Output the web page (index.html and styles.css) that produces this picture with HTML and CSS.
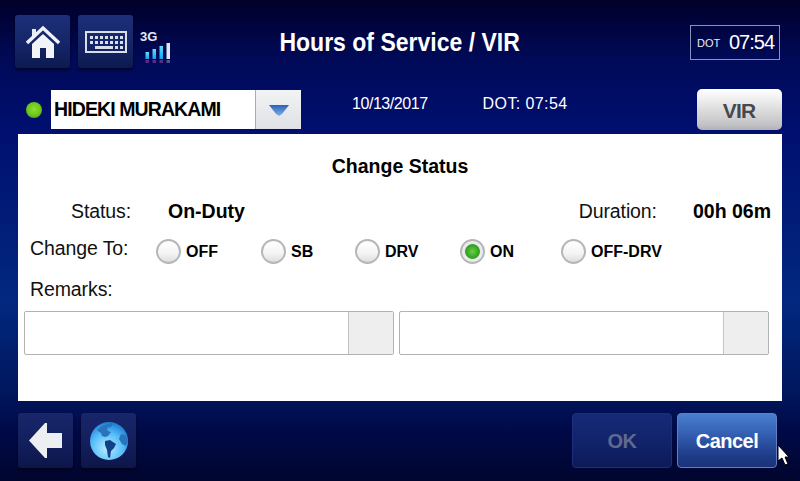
FILE: index.html
```html
<!DOCTYPE html>
<html lang="en">
<head>
    <meta charset="UTF-8">
    <title>Hours of Service / VIR</title>
    <link rel="stylesheet" href="styles.css">
</head>
<body>
    <div class="screen">
        <div class="top-bar">
            <div class="icon-btn">
                <svg width="34" height="34" viewBox="0 0 34 34">
                    <path d="M6 4h4v5l-4 3.500z" fill="#e8ecf2"/>
                    <path d="M1 18L17 3l16 15" fill="none" stroke="#eef1f6" stroke-width="3.400"/>
                    <path d="M6 19L17 9l11 10v14h-8V23h-6v10H6z" fill="#f2f4f8"/>
                </svg>
            </div>
            <div class="icon-btn keyboard-btn">
                <svg width="42" height="22" viewBox="0 0 42 22">
                    <rect x="1" y="1" width="40" height="20" fill="none" stroke="#d9deea" stroke-width="2"/>
                    <g fill="#d9deea">
                        <rect x="5" y="5" width="3" height="3"/>
                        <rect x="10" y="5" width="3" height="3"/>
                        <rect x="15" y="5" width="3" height="3"/>
                        <rect x="20" y="5" width="3" height="3"/>
                        <rect x="25" y="5" width="3" height="3"/>
                        <rect x="30" y="5" width="3" height="3"/>
                        <rect x="35" y="5" width="3" height="3"/>
                        <rect x="5" y="10" width="3" height="3"/>
                        <rect x="10" y="10" width="3" height="3"/>
                        <rect x="15" y="10" width="3" height="3"/>
                        <rect x="20" y="10" width="3" height="3"/>
                        <rect x="25" y="10" width="3" height="3"/>
                        <rect x="30" y="10" width="3" height="3"/>
                        <rect x="35" y="10" width="3" height="3"/>
                        <rect x="10" y="15" width="18" height="3"/>
                        <rect x="30" y="15" width="3" height="3"/>
                        <rect x="35" y="15" width="3" height="3"/>
                    </g>
                </svg>
            </div>
            <div class="signal">
                <span class="signal-label">3G</span>
                <svg width="26" height="21" viewBox="0 0 26 21">
                    <defs>
                        <linearGradient id="barBlue" x1="0" y1="0" x2="0" y2="1">
                            <stop offset="0" stop-color="#62dcff"/>
                            <stop offset="1" stop-color="#12a4f0"/>
                        </linearGradient>
                    </defs>
                    <rect x="0.500" y="9" width="3.500" height="7" fill="url(#barBlue)"/>
                    <rect x="7.500" y="6" width="3.500" height="10" fill="url(#barBlue)"/>
                    <rect x="14.500" y="3" width="3.500" height="13" fill="url(#barBlue)"/>
                    <rect x="21.500" y="0" width="3.500" height="16" fill="#dfe8f6"/>
                    <rect x="0.500" y="17" width="3.500" height="3" fill="#5a2a84"/>
                    <rect x="7.500" y="17" width="3.500" height="3" fill="#5a2a84"/>
                    <rect x="14.500" y="17" width="3.500" height="3" fill="#5a2a84"/>
                    <rect x="21.500" y="17" width="3.500" height="3" fill="#50508c"/>
                </svg>
            </div>
            <h1 class="page-title"><span>Hours of Service / VIR</span></h1>
            <div class="clock-box">
                <span class="clock-tag">DOT</span>
                <span class="clock-time">07:54</span>
            </div>
        </div>

        <div class="driver-bar">
            <span class="led"></span>
            <div class="driver-select">
                <span class="driver-name">HIDEKI MURAKAMI</span>
                <span class="driver-arrow">
                    <svg width="20" height="12" viewBox="0 0 20 12">
                        <defs>
                            <linearGradient id="arrowBlue" x1="0" y1="0" x2="0" y2="1">
                                <stop offset="0" stop-color="#2a62b8"/>
                                <stop offset="1" stop-color="#7fb0ea"/>
                            </linearGradient>
                        </defs>
                        <path d="M0 1h20l-7 9-3 2-3-2z" fill="url(#arrowBlue)"/>
                    </svg>
                </span>
            </div>
            <span class="date-text">10/13/2017</span>
            <span class="dot-text">DOT: 07:54</span>
            <div class="vir-btn">VIR</div>
        </div>

        <div class="panel">
            <h2 class="panel-title">Change Status</h2>
            <div class="status-row">
                <span class="label status-label">Status:</span>
                <span class="value status-value">On-Duty</span>
                <span class="label duration-label">Duration:</span>
                <span class="value duration-value">00h 06m</span>
            </div>
            <div class="change-row">
                <span class="label change-label">Change To:</span>
                <div class="radio-group">
                    <div class="radio-item"><span class="radio"></span>OFF</div>
                    <div class="radio-item"><span class="radio"></span>SB</div>
                    <div class="radio-item"><span class="radio"></span>DRV</div>
                    <div class="radio-item"><span class="radio checked"></span>ON</div>
                    <div class="radio-item"><span class="radio"></span>OFF-DRV</div>
                </div>
            </div>
            <div class="label remarks-label">Remarks:</div>
            <div class="remarks-row">
                <div class="remark-field"><span class="remark-input"></span><span class="remark-btn"></span></div>
                <div class="remark-field"><span class="remark-input"></span><span class="remark-btn"></span></div>
            </div>
        </div>

        <div class="bottom-bar">
            <div class="icon-btn back-btn">
                <svg width="33" height="35" viewBox="0 0 33 35">
                    <path d="M0 17.500L16 0h2v10h15v15H18v10h-2z" fill="#eceef2"/>
                </svg>
            </div>
            <div class="icon-btn globe-btn">
                <svg width="38" height="38" viewBox="0 0 38 38">
                    <defs>
                        <radialGradient id="sea" cx="0.45" cy="0.7" r="0.7">
                            <stop offset="0" stop-color="#b8ecff"/>
                            <stop offset="0.6" stop-color="#55bdf8"/>
                            <stop offset="1" stop-color="#1c7cd4"/>
                        </radialGradient>
                    </defs>
                    <circle cx="19" cy="19" r="19" fill="url(#sea)"/>
                    <path d="M7 8l5-4 8-3 3 1-2 3-4 1 1 3 3 1-3 4-3 1-3-1-1-3-3-2z" fill="#2a74bc"/>
                    <path d="M15 19l5-1 6 4-2 4-3 3-1 7-2-1-1-7-2-5z" fill="#123f86"/>
                    <path d="M31 12l5 1 2 6-2 5-4-2-3-5z" fill="#2a74bc"/>
                </svg>
            </div>
            <div class="action-btn ok-btn">OK</div>
            <div class="action-btn cancel-btn">Cancel</div>
        </div>

        <svg class="cursor" width="13" height="22" viewBox="0 0 13 22">
            <path d="M1 1v16l4-3 3 7 3-1-3-7h4z" fill="#fff" stroke="#000" stroke-width="1"/>
        </svg>
    </div>
</body>
</html>
```

FILE: styles.css
```css
html, body {
    margin: 0;
    padding: 0;
}
.screen {
    position: relative;
    display: flex;
    flex-direction: column;
    width: 800px;
    height: 481px;
    overflow: hidden;
    font-family: "Liberation Sans", Arial, sans-serif;
    color: #fff;
    background: linear-gradient(to bottom, #00002a 0, #000a58 60px, #000f70 130px, #02287f 300px, #00175f 390px, #000a48 430px, #00052e 481px);
}
.top-bar {
    display: flex;
    align-items: flex-start;
    height: 89px;
    padding: 15px 20px 0 15px;
    box-sizing: border-box;
}
.icon-btn {
    display: flex;
    align-items: center;
    justify-content: center;
    width: 55px;
    height: 53px;
    border-radius: 3px;
    background: linear-gradient(to bottom, #1c2f78 0, #16266a 50%, #0d1a50 100%);
    box-shadow: 0 2px 3px rgba(0,0,10,0.6);
}
.keyboard-btn {
    margin-left: 8px;
}
.signal {
    display: flex;
    flex-direction: column;
    width: 30px;
    margin: 16px 0 0 7px;
}
.signal-label {
    font-size: 13px;
    font-weight: bold;
    line-height: 12px;
    color: #e4e8f4;
}
.signal svg {
    margin: 0 0 0 5px;
}
.page-title {
    flex: 1;
    margin: 11px 0 0 0;
    padding-right: 60px;
    text-align: center;
    font-size: 25px;
    line-height: 32px;
    font-weight: bold;
}
.page-title span {
    display: inline-block;
    transform: scaleX(0.92);
}
.clock-box {
    display: flex;
    align-items: center;
    box-sizing: border-box;
    width: 90px;
    height: 35px;
    margin-top: 10px;
    padding-left: 6px;
    border: 1px solid #8393c4;
}
.clock-tag {
    font-size: 11px;
    width: 32px;
    color: #e8ecf6;
}
.clock-time {
    font-size: 20px;
    letter-spacing: -1px;
}
.driver-bar {
    display: flex;
    align-items: flex-start;
    height: 45px;
    padding-left: 26px;
}
.led {
    width: 16px;
    height: 16px;
    margin: 13px 9px 0 0;
    border-radius: 50%;
    background: radial-gradient(circle at 50% 45%, #8fe030 0, #6cc41c 55%, #3f7a30 100%);
}
.driver-select {
    display: flex;
    width: 250px;
    height: 39px;
    margin-top: 1px;
}
.driver-name {
    flex: 1;
    padding-left: 3px;
    background: #fff;
    color: #000;
    font-size: 19.500px;
    font-weight: bold;
    line-height: 39px;
    letter-spacing: -0.9px;
}
.driver-arrow {
    display: flex;
    align-items: center;
    justify-content: center;
    width: 46px;
    border-left: 1px solid #a8acb8;
    box-sizing: border-box;
    background: linear-gradient(to bottom, #f2f3f5 0, #dfe1e4 100%);
}
.date-text {
    margin: 5px 0 0 51px;
    font-size: 16px;
    line-height: 20px;
    letter-spacing: -0.45px;
}
.dot-text {
    margin: 5px 0 0 55px;
    font-size: 16px;
    line-height: 20px;
    letter-spacing: 0.4px;
}
.vir-btn {
    width: 85px;
    height: 41px;
    margin: 0 0 0 129px;
    border-radius: 5px;
    background: linear-gradient(to bottom, #ffffff 0, #f0efef 25%, #c4c4c6 85%, #b0b2b8 100%);
    color: #47494f;
    text-align: center;
    font-size: 21px;
    font-weight: bold;
    line-height: 44px;
    letter-spacing: -0.8px;
}
.panel {
    box-sizing: border-box;
    width: 764px;
    height: 267px;
    margin-left: 18px;
    background: #fff;
    color: #000;
}
.panel-title {
    margin: 21px 0 0 0;
    text-align: center;
    font-size: 19.500px;
    line-height: 22px;
    font-weight: bold;
}
.label {
    font-size: 19.500px;
    line-height: 24px;
    letter-spacing: -0.1px;
    color: #111;
}
.value {
    font-size: 19.500px;
    line-height: 24px;
    font-weight: bold;
}
.status-row {
    display: flex;
    margin-top: 22px;
}
.status-label {
    width: 113px;
    text-align: right;
}
.status-value {
    margin-left: 37px;
}
.duration-label {
    margin-left: auto;
}
.duration-value {
    margin: 0 11px 0 36px;
}
.change-row {
    display: flex;
    margin-top: 13px;
}
.change-label {
    width: 113px;
    padding-left: 12px;
    box-sizing: border-box;
}
.radio-group {
    display: grid;
    grid-template-columns: 105px 94px 105px 101px auto;
    margin: 3px 0 0 25px;
}
.radio-item {
    display: flex;
    align-items: center;
    gap: 5px;
    font-size: 16px;
    font-weight: bold;
}
.radio {
    box-sizing: border-box;
    width: 25px;
    height: 25px;
    border: 2px solid #b4b6b8;
    border-radius: 50%;
    background: linear-gradient(to bottom, #ffffff 0, #f4f4f4 60%, #dddddd 100%);
}
.radio.checked {
    background: radial-gradient(circle closest-side at 50% 50%, #6ad044 0, #2f9e1e 66%, #e6e6e6 74%, #f0f0f0 100%);
}
.remarks-label {
    margin: 13px 0 0 12px;
}
.remarks-row {
    display: flex;
    gap: 5px;
    margin: 10px 0 0 6px;
}
.remark-field {
    display: flex;
    box-sizing: border-box;
    width: 370px;
    height: 44px;
    border: 1px solid #b2b2b2;
    border-radius: 2px;
}
.remark-input {
    flex: 1;
}
.remark-btn {
    width: 44px;
    border-left: 1px solid #c4c4c4;
    background: #eeeeee;
}
.bottom-bar {
    display: flex;
    align-items: flex-start;
    padding: 12px 0 0 18px;
}
.back-btn,
.globe-btn {
    height: 55px;
    background: linear-gradient(to bottom, #18266a 0, #121e5c 60%, #0c1648 100%);
}
.globe-btn {
    margin-left: 8px;
}
.action-btn {
    box-sizing: border-box;
    width: 100px;
    height: 55px;
    border-radius: 4px;
    text-align: center;
    font-size: 20px;
    font-weight: bold;
    line-height: 55px;
    letter-spacing: -0.5px;
}
.ok-btn {
    margin-left: 436px;
    border: 1px solid #1d2f7a;
    background: linear-gradient(to bottom, #152a78 0, #102268 60%, #0c1a58 100%);
    color: #62698f;
}
.cancel-btn {
    margin-left: 5px;
    border: 1px solid #5f7fc0;
    background: linear-gradient(to bottom, #4a7ed0 0, #3562b4 35%, #203e8c 75%, #1a3278 100%);
}
.cursor {
    position: absolute;
    left: 777px;
    top: 444px;
}
```
